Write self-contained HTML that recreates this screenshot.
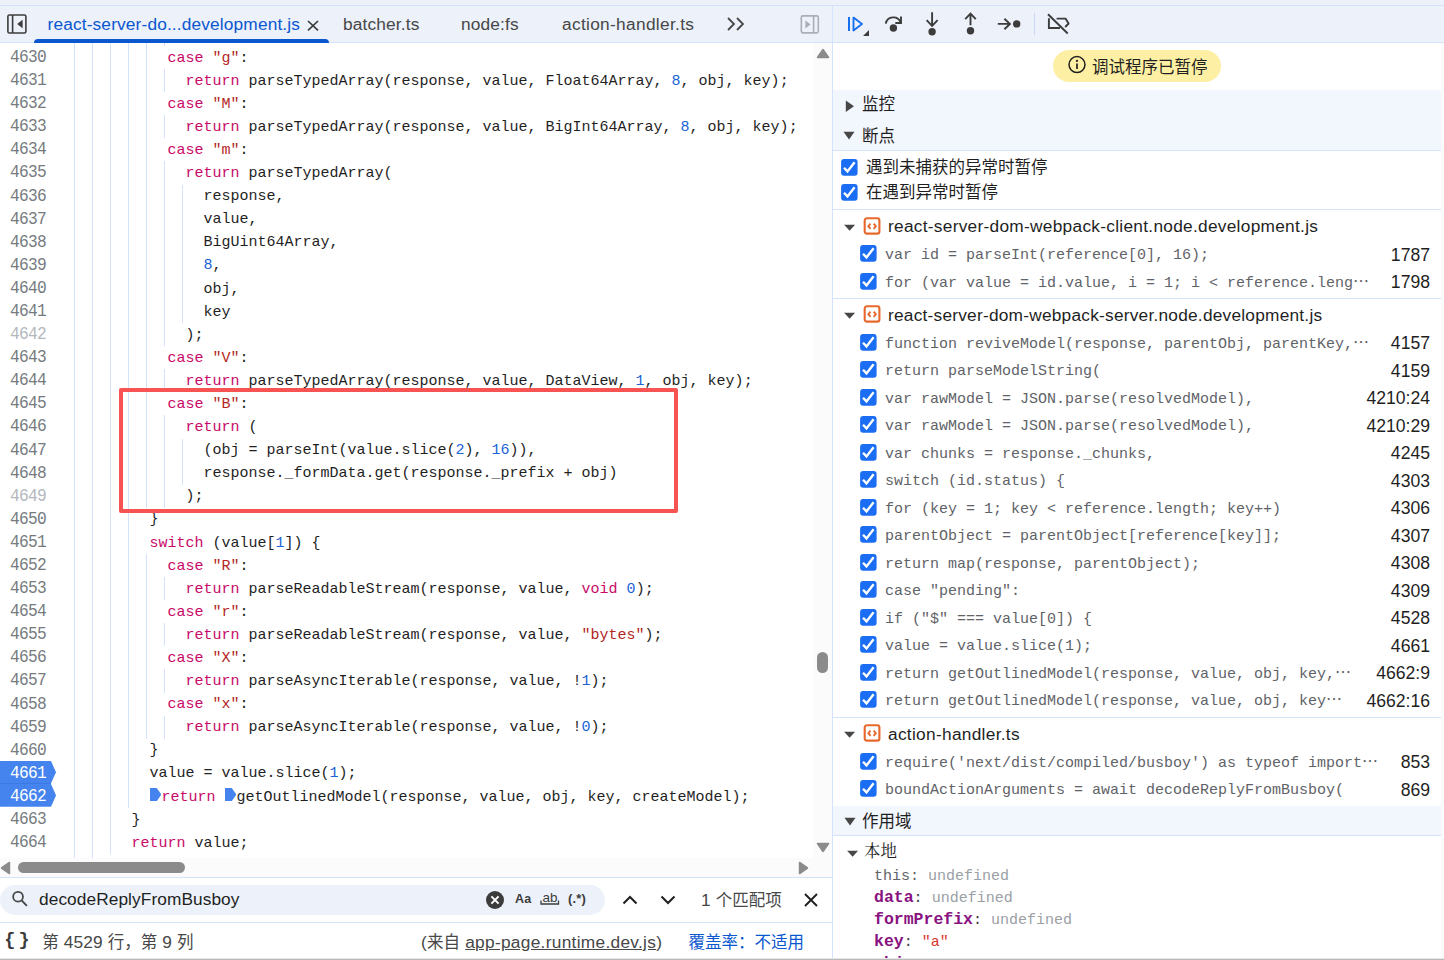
<!DOCTYPE html>
<html lang="zh-CN">
<head>
<meta charset="utf-8">
<title>DevTools</title>
<style>
*{box-sizing:border-box;margin:0;padding:0}
html,body{width:1444px;height:960px;overflow:hidden;background:#fff}
body{position:relative;font-family:"Liberation Sans","Noto Sans CJK SC",sans-serif;font-size:16.5px;color:#1f1f1f}
.abs{position:absolute}
.hl{position:absolute;height:1px;background:#d3e3fd}
.vl{position:absolute;width:1px;background:#d3e3fd}
.bar{position:absolute;background:#ecf1fa}
.t{position:absolute;white-space:nowrap;line-height:25px;height:25px;font-size:17.3px;letter-spacing:.15px}
.zh{font-size:16.5px;letter-spacing:0}
/* code */
#code{position:absolute;left:0;top:43px;width:813px;height:815px;overflow:hidden;background:#fff}
.row{position:absolute;left:0;width:813px;height:23.09px}
.row .ln,.row .c{position:absolute;top:0;font-family:"Liberation Mono",monospace;font-size:15px;line-height:23.09px;white-space:pre;height:23.09px}
.ln{left:10px;color:#767b80;font-size:18px !important;letter-spacing:-0.8px;transform:scaleX(0.9);transform-origin:0 0}
.ln.dim{color:#b4b8bd}
.ln.bp{color:#fff}
.c{color:#1f1f1f;top:0.7px !important}
.g{position:absolute;top:0;width:1px;height:23.09px;background:#d3e3fd}
.k{color:#c80a68}.s{color:#b3261e}.n{color:#1a62d6}
.ib{display:inline-block;width:11.8px;height:13.2px;margin:0 0.1px;vertical-align:-0.6px;background:#4584ee;clip-path:polygon(0 0,60% 0,100% 50%,60% 100%,0 100%)}
.bpm{position:absolute;left:0;height:23px;width:57px}
/* right */
.bc{position:absolute;font-family:"Liberation Mono",monospace;font-size:15px;line-height:23px;height:23px;white-space:pre;color:#5f6368}
.el{font-family:"Noto Sans CJK SC",sans-serif;font-size:16px;letter-spacing:0;line-height:0}
.loc{right:14px;text-align:right;color:#1f1f1f;font-size:17.6px;letter-spacing:0}
.cb{position:absolute}
.sv{position:absolute;font-family:"Liberation Mono",monospace;font-size:15px;line-height:22px;white-space:pre;left:874px;color:#3c3c3c}
.sv b{color:#881280;font-weight:bold;font-size:16.5px}
.sv .d{color:#5f6368}
.sv .u{color:#9aa0a6}
.sv .st{color:#dc362e}
</style>
</head>
<body>
<!-- top strip + bars -->
<div class="bar" style="left:0;top:0;width:1444px;height:43px"></div>
<div class="hl" style="left:0;top:5px;width:1444px"></div>
<div class="hl" style="left:0;top:42px;width:1444px"></div>

<!-- left tab bar -->
<svg class="abs" style="left:6px;top:13px" width="22" height="22" viewBox="0 0 22 22"><rect x="1.9" y="2" width="18" height="18" rx="1.6" fill="none" stroke="#3c3c3c" stroke-width="1.6"/><path d="M6.6 2 V20" stroke="#3c3c3c" stroke-width="1.6"/><path d="M16.6 6.8 V15.2 L11.2 11 Z" fill="#3c3c3c"/></svg>
<div class="t" id="tab1" style="left:47.5px;top:12px;color:#0b57d0">react-server-do...development.js</div>
<svg class="abs" style="left:305px;top:17px" width="16" height="16" viewBox="0 0 16 16"><path d="M3 4 L13 13.4 M13 4 L3 13.4" stroke="#3c3c3c" stroke-width="1.7" fill="none"/></svg>
<div class="abs" style="left:34px;top:39px;width:294.6px;height:4px;background:#0b57d0;border-radius:4px 4px 0 0"></div>
<div class="t" id="tab2" style="left:343px;top:12px;color:#474747">batcher.ts</div>
<div class="t" id="tab3" style="left:461px;top:12px;color:#474747">node:fs</div>
<div class="t" id="tab4" style="left:562px;letter-spacing:.32px;top:12px;color:#474747">action-handler.ts</div>
<svg class="abs" style="left:726px;top:16px" width="20" height="16" viewBox="0 0 20 16"><path d="M2 2 L8 8 L2 14 M11 2 L17 8 L11 14" stroke="#474747" stroke-width="1.8" fill="none"/></svg>
<svg class="abs" style="left:798.6px;top:13px" width="22" height="22" viewBox="0 0 22 22"><rect x="2.3" y="2.9" width="17" height="17" rx="1.6" fill="none" stroke="#a9afb8" stroke-width="1.6"/><path d="M14.6 2.9 V19.9" stroke="#a9afb8" stroke-width="1.6"/><path d="M6.4 7.4 V15.4 L11.6 11.4 Z" fill="#a9afb8"/></svg>

<!-- code editor -->
<div id="code">
<div class="bpm" style="top:718px"><svg width="57" height="47" viewBox="0 0 57 47"><path d="M0 22 H51.2 L50.8 23.3 H0 Z" fill="#3b76e2"/><path d="M0 0.1 H51 L56 11.2 L51 22.2 H0 Z" fill="#4584ee"/><path d="M0 23.1 H51 L56 34.4 L51 45.7 H0 Z" fill="#4584ee"/></svg></div>
<div class="row" style="top:-20.09px"><i class="g" style="left:74px"></i><i class="g" style="left:92px"></i><i class="g" style="left:110px"></i><i class="g" style="left:128px"></i><i class="g" style="left:146px"></i><i class="g" style="left:164px"></i></div>
<div class="row" style="top:3.00px"><i class="g" style="left:74px"></i><i class="g" style="left:92px"></i><i class="g" style="left:110px"></i><i class="g" style="left:128px"></i><i class="g" style="left:146px"></i><span class="ln">4630</span><span class="c" style="left:167.5px"><span class="k">case</span> <span class="s">"g"</span>:</span></div>
<div class="row" style="top:26.09px"><i class="g" style="left:74px"></i><i class="g" style="left:92px"></i><i class="g" style="left:110px"></i><i class="g" style="left:128px"></i><i class="g" style="left:146px"></i><i class="g" style="left:164px"></i><span class="ln">4631</span><span class="c" style="left:185.5px"><span class="k">return</span> parseTypedArray(response, value, Float64Array, <span class="n">8</span>, obj, key);</span></div>
<div class="row" style="top:49.18px"><i class="g" style="left:74px"></i><i class="g" style="left:92px"></i><i class="g" style="left:110px"></i><i class="g" style="left:128px"></i><i class="g" style="left:146px"></i><span class="ln">4632</span><span class="c" style="left:167.5px"><span class="k">case</span> <span class="s">"M"</span>:</span></div>
<div class="row" style="top:72.27px"><i class="g" style="left:74px"></i><i class="g" style="left:92px"></i><i class="g" style="left:110px"></i><i class="g" style="left:128px"></i><i class="g" style="left:146px"></i><i class="g" style="left:164px"></i><span class="ln">4633</span><span class="c" style="left:185.5px"><span class="k">return</span> parseTypedArray(response, value, BigInt64Array, <span class="n">8</span>, obj, key);</span></div>
<div class="row" style="top:95.36px"><i class="g" style="left:74px"></i><i class="g" style="left:92px"></i><i class="g" style="left:110px"></i><i class="g" style="left:128px"></i><i class="g" style="left:146px"></i><span class="ln">4634</span><span class="c" style="left:167.5px"><span class="k">case</span> <span class="s">"m"</span>:</span></div>
<div class="row" style="top:118.45px"><i class="g" style="left:74px"></i><i class="g" style="left:92px"></i><i class="g" style="left:110px"></i><i class="g" style="left:128px"></i><i class="g" style="left:146px"></i><i class="g" style="left:164px"></i><span class="ln">4635</span><span class="c" style="left:185.5px"><span class="k">return</span> parseTypedArray(</span></div>
<div class="row" style="top:141.54px"><i class="g" style="left:74px"></i><i class="g" style="left:92px"></i><i class="g" style="left:110px"></i><i class="g" style="left:128px"></i><i class="g" style="left:146px"></i><i class="g" style="left:164px"></i><i class="g" style="left:182px"></i><span class="ln">4636</span><span class="c" style="left:203.5px">response,</span></div>
<div class="row" style="top:164.63px"><i class="g" style="left:74px"></i><i class="g" style="left:92px"></i><i class="g" style="left:110px"></i><i class="g" style="left:128px"></i><i class="g" style="left:146px"></i><i class="g" style="left:164px"></i><i class="g" style="left:182px"></i><span class="ln">4637</span><span class="c" style="left:203.5px">value,</span></div>
<div class="row" style="top:187.72px"><i class="g" style="left:74px"></i><i class="g" style="left:92px"></i><i class="g" style="left:110px"></i><i class="g" style="left:128px"></i><i class="g" style="left:146px"></i><i class="g" style="left:164px"></i><i class="g" style="left:182px"></i><span class="ln">4638</span><span class="c" style="left:203.5px">BigUint64Array,</span></div>
<div class="row" style="top:210.81px"><i class="g" style="left:74px"></i><i class="g" style="left:92px"></i><i class="g" style="left:110px"></i><i class="g" style="left:128px"></i><i class="g" style="left:146px"></i><i class="g" style="left:164px"></i><i class="g" style="left:182px"></i><span class="ln">4639</span><span class="c" style="left:203.5px"><span class="n">8</span>,</span></div>
<div class="row" style="top:233.90px"><i class="g" style="left:74px"></i><i class="g" style="left:92px"></i><i class="g" style="left:110px"></i><i class="g" style="left:128px"></i><i class="g" style="left:146px"></i><i class="g" style="left:164px"></i><i class="g" style="left:182px"></i><span class="ln">4640</span><span class="c" style="left:203.5px">obj,</span></div>
<div class="row" style="top:256.99px"><i class="g" style="left:74px"></i><i class="g" style="left:92px"></i><i class="g" style="left:110px"></i><i class="g" style="left:128px"></i><i class="g" style="left:146px"></i><i class="g" style="left:164px"></i><i class="g" style="left:182px"></i><span class="ln">4641</span><span class="c" style="left:203.5px">key</span></div>
<div class="row" style="top:280.08px"><i class="g" style="left:74px"></i><i class="g" style="left:92px"></i><i class="g" style="left:110px"></i><i class="g" style="left:128px"></i><i class="g" style="left:146px"></i><i class="g" style="left:164px"></i><span class="ln dim">4642</span><span class="c" style="left:185.5px">);</span></div>
<div class="row" style="top:303.17px"><i class="g" style="left:74px"></i><i class="g" style="left:92px"></i><i class="g" style="left:110px"></i><i class="g" style="left:128px"></i><i class="g" style="left:146px"></i><span class="ln">4643</span><span class="c" style="left:167.5px"><span class="k">case</span> <span class="s">"V"</span>:</span></div>
<div class="row" style="top:326.26px"><i class="g" style="left:74px"></i><i class="g" style="left:92px"></i><i class="g" style="left:110px"></i><i class="g" style="left:128px"></i><i class="g" style="left:146px"></i><i class="g" style="left:164px"></i><span class="ln">4644</span><span class="c" style="left:185.5px"><span class="k">return</span> parseTypedArray(response, value, DataView, <span class="n">1</span>, obj, key);</span></div>
<div class="row" style="top:349.35px"><i class="g" style="left:74px"></i><i class="g" style="left:92px"></i><i class="g" style="left:110px"></i><i class="g" style="left:128px"></i><i class="g" style="left:146px"></i><span class="ln">4645</span><span class="c" style="left:167.5px"><span class="k">case</span> <span class="s">"B"</span>:</span></div>
<div class="row" style="top:372.44px"><i class="g" style="left:74px"></i><i class="g" style="left:92px"></i><i class="g" style="left:110px"></i><i class="g" style="left:128px"></i><i class="g" style="left:146px"></i><i class="g" style="left:164px"></i><span class="ln">4646</span><span class="c" style="left:185.5px"><span class="k">return</span> (</span></div>
<div class="row" style="top:395.53px"><i class="g" style="left:74px"></i><i class="g" style="left:92px"></i><i class="g" style="left:110px"></i><i class="g" style="left:128px"></i><i class="g" style="left:146px"></i><i class="g" style="left:164px"></i><i class="g" style="left:182px"></i><span class="ln">4647</span><span class="c" style="left:203.5px">(obj = parseInt(value.slice(<span class="n">2</span>), <span class="n">16</span>)),</span></div>
<div class="row" style="top:418.62px"><i class="g" style="left:74px"></i><i class="g" style="left:92px"></i><i class="g" style="left:110px"></i><i class="g" style="left:128px"></i><i class="g" style="left:146px"></i><i class="g" style="left:164px"></i><i class="g" style="left:182px"></i><span class="ln">4648</span><span class="c" style="left:203.5px">response._formData.get(response._prefix + obj)</span></div>
<div class="row" style="top:441.71px"><i class="g" style="left:74px"></i><i class="g" style="left:92px"></i><i class="g" style="left:110px"></i><i class="g" style="left:128px"></i><i class="g" style="left:146px"></i><i class="g" style="left:164px"></i><span class="ln dim">4649</span><span class="c" style="left:185.5px">);</span></div>
<div class="row" style="top:464.80px"><i class="g" style="left:74px"></i><i class="g" style="left:92px"></i><i class="g" style="left:110px"></i><i class="g" style="left:128px"></i><span class="ln">4650</span><span class="c" style="left:149.5px">}</span></div>
<div class="row" style="top:487.89px"><i class="g" style="left:74px"></i><i class="g" style="left:92px"></i><i class="g" style="left:110px"></i><i class="g" style="left:128px"></i><span class="ln">4651</span><span class="c" style="left:149.5px"><span class="k">switch</span> (value[<span class="n">1</span>]) {</span></div>
<div class="row" style="top:510.98px"><i class="g" style="left:74px"></i><i class="g" style="left:92px"></i><i class="g" style="left:110px"></i><i class="g" style="left:128px"></i><i class="g" style="left:146px"></i><span class="ln">4652</span><span class="c" style="left:167.5px"><span class="k">case</span> <span class="s">"R"</span>:</span></div>
<div class="row" style="top:534.07px"><i class="g" style="left:74px"></i><i class="g" style="left:92px"></i><i class="g" style="left:110px"></i><i class="g" style="left:128px"></i><i class="g" style="left:146px"></i><i class="g" style="left:164px"></i><span class="ln">4653</span><span class="c" style="left:185.5px"><span class="k">return</span> parseReadableStream(response, value, <span class="k">void</span> <span class="n">0</span>);</span></div>
<div class="row" style="top:557.16px"><i class="g" style="left:74px"></i><i class="g" style="left:92px"></i><i class="g" style="left:110px"></i><i class="g" style="left:128px"></i><i class="g" style="left:146px"></i><span class="ln">4654</span><span class="c" style="left:167.5px"><span class="k">case</span> <span class="s">"r"</span>:</span></div>
<div class="row" style="top:580.25px"><i class="g" style="left:74px"></i><i class="g" style="left:92px"></i><i class="g" style="left:110px"></i><i class="g" style="left:128px"></i><i class="g" style="left:146px"></i><i class="g" style="left:164px"></i><span class="ln">4655</span><span class="c" style="left:185.5px"><span class="k">return</span> parseReadableStream(response, value, <span class="s">"bytes"</span>);</span></div>
<div class="row" style="top:603.34px"><i class="g" style="left:74px"></i><i class="g" style="left:92px"></i><i class="g" style="left:110px"></i><i class="g" style="left:128px"></i><i class="g" style="left:146px"></i><span class="ln">4656</span><span class="c" style="left:167.5px"><span class="k">case</span> <span class="s">"X"</span>:</span></div>
<div class="row" style="top:626.43px"><i class="g" style="left:74px"></i><i class="g" style="left:92px"></i><i class="g" style="left:110px"></i><i class="g" style="left:128px"></i><i class="g" style="left:146px"></i><i class="g" style="left:164px"></i><span class="ln">4657</span><span class="c" style="left:185.5px"><span class="k">return</span> parseAsyncIterable(response, value, !<span class="n">1</span>);</span></div>
<div class="row" style="top:649.52px"><i class="g" style="left:74px"></i><i class="g" style="left:92px"></i><i class="g" style="left:110px"></i><i class="g" style="left:128px"></i><i class="g" style="left:146px"></i><span class="ln">4658</span><span class="c" style="left:167.5px"><span class="k">case</span> <span class="s">"x"</span>:</span></div>
<div class="row" style="top:672.61px"><i class="g" style="left:74px"></i><i class="g" style="left:92px"></i><i class="g" style="left:110px"></i><i class="g" style="left:128px"></i><i class="g" style="left:146px"></i><i class="g" style="left:164px"></i><span class="ln">4659</span><span class="c" style="left:185.5px"><span class="k">return</span> parseAsyncIterable(response, value, !<span class="n">0</span>);</span></div>
<div class="row" style="top:695.70px"><i class="g" style="left:74px"></i><i class="g" style="left:92px"></i><i class="g" style="left:110px"></i><i class="g" style="left:128px"></i><span class="ln">4660</span><span class="c" style="left:149.5px">}</span></div>
<div class="row" style="top:718.79px"><i class="g" style="left:74px"></i><i class="g" style="left:92px"></i><i class="g" style="left:110px"></i><i class="g" style="left:128px"></i><span class="ln bp">4661</span><span class="c" style="left:149.5px">value = value.slice(<span class="n">1</span>);</span></div>
<div class="row" style="top:741.88px"><i class="g" style="left:74px"></i><i class="g" style="left:92px"></i><i class="g" style="left:110px"></i><i class="g" style="left:128px"></i><span class="ln bp">4662</span><span class="c" style="left:149.5px"><b class="ib"></b><span class="k">return</span> <b class="ib"></b>getOutlinedModel(response, value, obj, key, createModel);</span></div>
<div class="row" style="top:764.97px"><i class="g" style="left:74px"></i><i class="g" style="left:92px"></i><i class="g" style="left:110px"></i><span class="ln">4663</span><span class="c" style="left:131.5px">}</span></div>
<div class="row" style="top:788.06px"><i class="g" style="left:74px"></i><i class="g" style="left:92px"></i><i class="g" style="left:110px"></i><span class="ln">4664</span><span class="c" style="left:131.5px"><span class="k">return</span> value;</span></div>
<div class="row" style="top:811.15px"><i class="g" style="left:74px"></i><i class="g" style="left:92px"></i><span class="ln">4665</span><span class="c" style="left:113.5px">}</span></div>
</div>
<!-- red annotation rectangle -->
<div class="abs" style="left:119px;top:388px;width:558.5px;height:125px;border:4.6px solid #f75353;border-radius:2px"></div>

<!-- vertical scrollbar -->
<div class="abs" style="left:813px;top:43px;width:19px;height:815px;background:#fbfbfb"></div>
<svg class="abs" style="left:815.5px;top:48.2px" width="14" height="11" viewBox="0 0 14 11"><path d="M7 0.8 Q7.6 0.8 8 1.4 L13.2 9 Q13.6 10.2 12.4 10.2 H1.6 Q0.4 10.2 0.8 9 L6 1.4 Q6.4 0.8 7 0.8Z" fill="#8b8b8b"/></svg>
<svg class="abs" style="left:815.5px;top:842px" width="14" height="11" viewBox="0 0 14 11"><path d="M7 10.2 Q7.6 10.2 8 9.6 L13.2 2 Q13.6 0.8 12.4 0.8 H1.6 Q0.4 0.8 0.8 2 L6 9.6 Q6.4 10.2 7 10.2Z" fill="#8b8b8b"/></svg>
<div class="abs" style="left:817px;top:652px;width:11px;height:21px;border-radius:5.5px;background:#8b8b8b"></div>
<!-- horizontal scrollbar -->
<div class="abs" style="left:0;top:858px;width:832px;height:19px;background:#fbfbfb"></div>
<svg class="abs" style="left:0px;top:861px" width="11" height="14" viewBox="0 0 11 14"><path d="M0.8 7 Q0.8 6.4 1.4 6 L9 0.8 Q10.2 0.4 10.2 1.6 V12.4 Q10.2 13.6 9 13.2 L1.4 8 Q0.8 7.6 0.8 7Z" fill="#8b8b8b"/></svg>
<svg class="abs" style="left:798px;top:861px" width="11" height="14" viewBox="0 0 11 14"><path d="M10.2 7 Q10.2 6.4 9.6 6 L2 0.8 Q0.8 0.4 0.8 1.6 V12.4 Q0.8 13.6 2 13.2 L9.6 8 Q10.2 7.6 10.2 7Z" fill="#8b8b8b"/></svg>
<div class="abs" style="left:18px;top:862px;width:167px;height:11px;border-radius:5.5px;background:#8b8b8b"></div>
<div class="hl" style="left:0;top:877px;width:832px"></div>

<!-- search bar -->
<div class="abs" style="left:0;top:885px;width:604.6px;height:30px;border-radius:15px;background:#edf2fa"></div>
<svg class="abs" style="left:10px;top:890px" width="20" height="20" viewBox="0 0 20 20"><circle cx="8.05" cy="6.7" r="4.9" fill="none" stroke="#474747" stroke-width="1.8"/><path d="M11.6 10.3 L16.9 15.8" stroke="#474747" stroke-width="1.9"/></svg>
<div class="t" id="srch" style="left:39px;top:887px;letter-spacing:.08px;color:#1f1f1f">decodeReplyFromBusboy</div>
<svg class="abs" style="left:485px;top:890px" width="20" height="20" viewBox="0 0 20 20"><circle cx="10" cy="10" r="9" fill="#3c3c3c"/><path d="M6.4 6.4 L13.6 13.6 M13.6 6.4 L6.4 13.6" stroke="#fff" stroke-width="2"/></svg>
<div class="t" style="left:515px;top:887px;font-size:12.5px;font-weight:bold;color:#3c3c3c">Aa</div>
<div class="t" style="left:542.5px;top:884.5px;font-size:13.5px;letter-spacing:0;color:#3c3c3c">ab</div><svg class="abs" style="left:540px;top:900px" width="20" height="6" viewBox="0 0 20 6"><path d="M1 0.5 V4 H18.5 V0.5" fill="none" stroke="#3c3c3c" stroke-width="1.3"/></svg>
<div class="t" style="left:568px;top:886px;font-size:13px;font-weight:bold;color:#3c3c3c">(.*)</div>
<svg class="abs" style="left:621px;top:892px" width="18" height="16" viewBox="0 0 18 16"><path d="M2.5 11.5 L9 5 L15.5 11.5" stroke="#1f1f1f" stroke-width="2" fill="none"/></svg>
<svg class="abs" style="left:659px;top:892px" width="18" height="16" viewBox="0 0 18 16"><path d="M2.5 4.5 L9 11 L15.5 4.5" stroke="#1f1f1f" stroke-width="2" fill="none"/></svg>
<div class="t" id="match" style="left:701px;top:888px;color:#474747">1 <span class="zh">个匹配项</span></div>
<svg class="abs" style="left:803px;top:892px" width="16" height="16" viewBox="0 0 16 16"><path d="M2 2 L14 14 M14 2 L2 14" stroke="#1f1f1f" stroke-width="1.9" fill="none"/></svg>
<div class="hl" style="left:0;top:922px;width:832px"></div>

<!-- status bar -->
<div class="t" style="left:4.2px;top:927.5px;font-family:'Liberation Mono',monospace;font-size:18.5px;font-weight:bold;color:#3c3c3c;letter-spacing:3.2px;transform-origin:0 0">{}</div>
<div class="t" id="pos" style="left:42.3px;top:929.8px;color:#474747"><span class="zh">第</span> 4529 <span class="zh">行，第</span> 9 <span class="zh">列</span></div>
<div class="t" id="from" style="left:421px;top:929.8px;letter-spacing:.3px;color:#474747">(<span class="zh">来自</span> <span style="text-decoration:underline">app-page.runtime.dev.js</span>)</div>
<div class="t zh" id="cov" style="left:688.5px;top:929.8px;color:#0b57d0">覆盖率：不适用</div>

<!-- divider -->
<div class="vl" style="left:832px;top:5px;height:955px"></div>

<!-- right toolbar -->
<svg class="abs" style="left:845px;top:12px" width="26" height="26" viewBox="0 0 26 26"><path d="M4 5 V19" stroke="#1a6ff0" stroke-width="2"/><path d="M8.5 5.6 L17 12 L8.5 18.4 Z" fill="none" stroke="#1a6ff0" stroke-width="1.9" stroke-linejoin="round"/><path d="M24 18 V24 H18 Z" fill="#3c3c3c"/></svg>
<svg class="abs" style="left:883px;top:12px" width="24" height="24" viewBox="0 0 24 24"><path d="M2.75 11.6 A7.7 7.7 0 0 1 17.6 10.6" fill="none" stroke="#3c3c3c" stroke-width="1.9"/><path d="M18 4.4 V11 H12.3" fill="none" stroke="#3c3c3c" stroke-width="1.9"/><circle cx="10.4" cy="16" r="3.7" fill="#3c3c3c"/></svg>
<svg class="abs" style="left:920px;top:10px" width="24" height="28" viewBox="0 0 24 28"><path d="M12.1 2.2 V15.6 M6.6 10.1 L12.1 15.8 L17.6 10.1" fill="none" stroke="#3c3c3c" stroke-width="1.9"/><circle cx="12.1" cy="21.8" r="3.7" fill="#3c3c3c"/></svg>
<svg class="abs" style="left:958px;top:10px" width="24" height="28" viewBox="0 0 24 28"><path d="M12.5 15.2 V3.8 M7.2 9.1 L12.5 3.6 L17.8 9.1" fill="none" stroke="#3c3c3c" stroke-width="1.9"/><circle cx="12.5" cy="20.8" r="3.7" fill="#3c3c3c"/></svg>
<svg class="abs" style="left:996px;top:12px" width="28" height="24" viewBox="0 0 28 24"><path d="M1.8 11.9 H13.7 M8.4 6.7 L13.9 11.9 L8.4 17.2" fill="none" stroke="#3c3c3c" stroke-width="1.9"/><circle cx="20.7" cy="11.9" r="3.7" fill="#3c3c3c"/></svg>
<div class="vl" style="left:1034px;top:13px;height:22px;background:#c7d9f7"></div>
<svg class="abs" style="left:1046px;top:12px" width="26" height="24" viewBox="0 0 26 24"><path d="M2.9 6.3 V16 H14" fill="none" stroke="#3c3c3c" stroke-width="1.9"/><path d="M10.6 6.6 H19.5 L22.6 11.5 L19.2 15" fill="none" stroke="#3c3c3c" stroke-width="1.9" stroke-linejoin="round"/><path d="M2 2.2 L21.7 21.5" stroke="#3c3c3c" stroke-width="1.9"/></svg>

<!-- paused pill -->
<div class="abs" style="left:1053px;top:50px;width:168.4px;height:32.2px;border-radius:16px;background:#fdf0a4"></div>
<svg class="abs" style="left:1066px;top:54.3px" width="22" height="22" viewBox="0 0 22 22"><circle cx="11" cy="10.6" r="8" fill="none" stroke="#1f1f1f" stroke-width="1.5"/><path d="M11 9.6 V15" stroke="#1f1f1f" stroke-width="1.7"/><circle cx="11" cy="6.9" r="1.05" fill="#1f1f1f"/></svg>
<div class="t zh" id="pill" style="left:1092px;top:55.2px;color:#1f1f1f">调试程序已暂停</div>

<!-- section headers -->
<div class="abs" style="left:833px;top:90px;width:608px;height:60px;background:#f2f6fd"></div>
<svg class="abs" style="left:845.4px;top:100.2px" width="10" height="13" viewBox="0 0 10 13"><path d="M0.8 0.4 V12 L9 6.2 Z" fill="#474747"/></svg>
<div class="t zh" style="left:862px;top:92px">监控</div>
<svg class="abs" style="left:843.4px;top:131.2px" width="13" height="10" viewBox="0 0 13 10"><path d="M0.5 0.8 H11.5 L6 8.6 Z" fill="#474747"/></svg>
<div class="t zh" style="left:862px;top:124.3px">断点</div>
<div class="hl" style="left:833px;top:150px;width:608px"></div>
<svg class="cb" style="left:841.0px;top:158.7px" width="17" height="17" viewBox="0 0 17 17"><rect x="0.1" y="0.1" width="16.5" height="16.7" rx="3" fill="#1b6ef3"/><path d="M3 8.75 L6.5 12.4 L13.6 3.3" fill="none" stroke="#fff" stroke-width="2.4"/></svg>
<div class="t zh" id="ex1" style="left:866px;top:155.2px">遇到未捕获的异常时暂停</div>
<svg class="cb" style="left:841.0px;top:183.5px" width="17" height="17" viewBox="0 0 17 17"><rect x="0.1" y="0.1" width="16.5" height="16.7" rx="3" fill="#1b6ef3"/><path d="M3 8.75 L6.5 12.4 L13.6 3.3" fill="none" stroke="#fff" stroke-width="2.4"/></svg>
<div class="t zh" id="ex2" style="left:866px;top:180.2px">在遇到异常时暂停</div>
<div class="hl" style="left:833px;top:209px;width:608px"></div>
<div class="hl" style="left:833px;top:298px;width:608px"></div>
<div class="hl" style="left:833px;top:717px;width:608px"></div>
<svg class="abs" style="left:844.0px;top:223.8px" width="12" height="8" viewBox="0 0 12 8"><path d="M0.1 0.8 H11.1 L5.6 6.7 Z" fill="#474747"/></svg>
<svg class="abs" style="left:863.0px;top:216.8px" width="18" height="19" viewBox="0 0 18 19"><rect x="1.7" y="1.3" width="14.7" height="15.3" rx="2.2" fill="#fff" stroke="#e8682c" stroke-width="2.1"/><path d="M7.5 6.6 L5.4 9.2 L7.5 11.8 M10.7 6.6 L12.8 9.2 L10.7 11.8" fill="none" stroke="#e8682c" stroke-width="1.9"/></svg>
<div class="t gt" style="left:888px;top:214.3px;letter-spacing:.28px">react-server-dom-webpack-client.node.development.js</div>
<svg class="cb" style="left:860.0px;top:245.2px" width="17" height="17" viewBox="0 0 17 17"><rect x="0.1" y="0.1" width="16.5" height="16.7" rx="3" fill="#1b6ef3"/><path d="M3 8.75 L6.5 12.4 L13.6 3.3" fill="none" stroke="#fff" stroke-width="2.4"/></svg>
<div class="bc" style="left:885px;top:244.2px">var id = parseInt(reference[0], 16);</div>
<div class="t loc" style="top:242.8px">1787</div>
<svg class="cb" style="left:860.0px;top:272.7px" width="17" height="17" viewBox="0 0 17 17"><rect x="0.1" y="0.1" width="16.5" height="16.7" rx="3" fill="#1b6ef3"/><path d="M3 8.75 L6.5 12.4 L13.6 3.3" fill="none" stroke="#fff" stroke-width="2.4"/></svg>
<div class="bc" style="left:885px;top:271.7px">for (var value = id.value, i = 1; i &lt; reference.leng<span class="el">…</span></div>
<div class="t loc" style="top:270.3px">1798</div>
<svg class="abs" style="left:844.0px;top:312.3px" width="12" height="8" viewBox="0 0 12 8"><path d="M0.1 0.8 H11.1 L5.6 6.7 Z" fill="#474747"/></svg>
<svg class="abs" style="left:863.0px;top:305.3px" width="18" height="19" viewBox="0 0 18 19"><rect x="1.7" y="1.3" width="14.7" height="15.3" rx="2.2" fill="#fff" stroke="#e8682c" stroke-width="2.1"/><path d="M7.5 6.6 L5.4 9.2 L7.5 11.8 M10.7 6.6 L12.8 9.2 L10.7 11.8" fill="none" stroke="#e8682c" stroke-width="1.9"/></svg>
<div class="t gt" style="left:888px;top:302.8px;letter-spacing:.23px">react-server-dom-webpack-server.node.development.js</div>
<svg class="cb" style="left:860.0px;top:333.7px" width="17" height="17" viewBox="0 0 17 17"><rect x="0.1" y="0.1" width="16.5" height="16.7" rx="3" fill="#1b6ef3"/><path d="M3 8.75 L6.5 12.4 L13.6 3.3" fill="none" stroke="#fff" stroke-width="2.4"/></svg>
<div class="bc" style="left:885px;top:332.7px">function reviveModel(response, parentObj, parentKey,<span class="el">…</span></div>
<div class="t loc" style="top:331.3px">4157</div>
<svg class="cb" style="left:860.0px;top:361.2px" width="17" height="17" viewBox="0 0 17 17"><rect x="0.1" y="0.1" width="16.5" height="16.7" rx="3" fill="#1b6ef3"/><path d="M3 8.75 L6.5 12.4 L13.6 3.3" fill="none" stroke="#fff" stroke-width="2.4"/></svg>
<div class="bc" style="left:885px;top:360.2px">return parseModelString(</div>
<div class="t loc" style="top:358.8px">4159</div>
<svg class="cb" style="left:860.0px;top:388.7px" width="17" height="17" viewBox="0 0 17 17"><rect x="0.1" y="0.1" width="16.5" height="16.7" rx="3" fill="#1b6ef3"/><path d="M3 8.75 L6.5 12.4 L13.6 3.3" fill="none" stroke="#fff" stroke-width="2.4"/></svg>
<div class="bc" style="left:885px;top:387.7px">var rawModel = JSON.parse(resolvedModel),</div>
<div class="t loc" style="top:386.3px">4210:24</div>
<svg class="cb" style="left:860.0px;top:416.2px" width="17" height="17" viewBox="0 0 17 17"><rect x="0.1" y="0.1" width="16.5" height="16.7" rx="3" fill="#1b6ef3"/><path d="M3 8.75 L6.5 12.4 L13.6 3.3" fill="none" stroke="#fff" stroke-width="2.4"/></svg>
<div class="bc" style="left:885px;top:415.2px">var rawModel = JSON.parse(resolvedModel),</div>
<div class="t loc" style="top:413.8px">4210:29</div>
<svg class="cb" style="left:860.0px;top:443.7px" width="17" height="17" viewBox="0 0 17 17"><rect x="0.1" y="0.1" width="16.5" height="16.7" rx="3" fill="#1b6ef3"/><path d="M3 8.75 L6.5 12.4 L13.6 3.3" fill="none" stroke="#fff" stroke-width="2.4"/></svg>
<div class="bc" style="left:885px;top:442.7px">var chunks = response._chunks,</div>
<div class="t loc" style="top:441.3px">4245</div>
<svg class="cb" style="left:860.0px;top:471.2px" width="17" height="17" viewBox="0 0 17 17"><rect x="0.1" y="0.1" width="16.5" height="16.7" rx="3" fill="#1b6ef3"/><path d="M3 8.75 L6.5 12.4 L13.6 3.3" fill="none" stroke="#fff" stroke-width="2.4"/></svg>
<div class="bc" style="left:885px;top:470.2px">switch (id.status) {</div>
<div class="t loc" style="top:468.8px">4303</div>
<svg class="cb" style="left:860.0px;top:498.7px" width="17" height="17" viewBox="0 0 17 17"><rect x="0.1" y="0.1" width="16.5" height="16.7" rx="3" fill="#1b6ef3"/><path d="M3 8.75 L6.5 12.4 L13.6 3.3" fill="none" stroke="#fff" stroke-width="2.4"/></svg>
<div class="bc" style="left:885px;top:497.7px">for (key = 1; key &lt; reference.length; key++)</div>
<div class="t loc" style="top:496.3px">4306</div>
<svg class="cb" style="left:860.0px;top:526.2px" width="17" height="17" viewBox="0 0 17 17"><rect x="0.1" y="0.1" width="16.5" height="16.7" rx="3" fill="#1b6ef3"/><path d="M3 8.75 L6.5 12.4 L13.6 3.3" fill="none" stroke="#fff" stroke-width="2.4"/></svg>
<div class="bc" style="left:885px;top:525.2px">parentObject = parentObject[reference[key]];</div>
<div class="t loc" style="top:523.8px">4307</div>
<svg class="cb" style="left:860.0px;top:553.7px" width="17" height="17" viewBox="0 0 17 17"><rect x="0.1" y="0.1" width="16.5" height="16.7" rx="3" fill="#1b6ef3"/><path d="M3 8.75 L6.5 12.4 L13.6 3.3" fill="none" stroke="#fff" stroke-width="2.4"/></svg>
<div class="bc" style="left:885px;top:552.7px">return map(response, parentObject);</div>
<div class="t loc" style="top:551.3px">4308</div>
<svg class="cb" style="left:860.0px;top:581.2px" width="17" height="17" viewBox="0 0 17 17"><rect x="0.1" y="0.1" width="16.5" height="16.7" rx="3" fill="#1b6ef3"/><path d="M3 8.75 L6.5 12.4 L13.6 3.3" fill="none" stroke="#fff" stroke-width="2.4"/></svg>
<div class="bc" style="left:885px;top:580.2px">case "pending":</div>
<div class="t loc" style="top:578.8px">4309</div>
<svg class="cb" style="left:860.0px;top:608.7px" width="17" height="17" viewBox="0 0 17 17"><rect x="0.1" y="0.1" width="16.5" height="16.7" rx="3" fill="#1b6ef3"/><path d="M3 8.75 L6.5 12.4 L13.6 3.3" fill="none" stroke="#fff" stroke-width="2.4"/></svg>
<div class="bc" style="left:885px;top:607.7px">if ("$" === value[0]) {</div>
<div class="t loc" style="top:606.3px">4528</div>
<svg class="cb" style="left:860.0px;top:636.2px" width="17" height="17" viewBox="0 0 17 17"><rect x="0.1" y="0.1" width="16.5" height="16.7" rx="3" fill="#1b6ef3"/><path d="M3 8.75 L6.5 12.4 L13.6 3.3" fill="none" stroke="#fff" stroke-width="2.4"/></svg>
<div class="bc" style="left:885px;top:635.2px">value = value.slice(1);</div>
<div class="t loc" style="top:633.8px">4661</div>
<svg class="cb" style="left:860.0px;top:663.7px" width="17" height="17" viewBox="0 0 17 17"><rect x="0.1" y="0.1" width="16.5" height="16.7" rx="3" fill="#1b6ef3"/><path d="M3 8.75 L6.5 12.4 L13.6 3.3" fill="none" stroke="#fff" stroke-width="2.4"/></svg>
<div class="bc" style="left:885px;top:662.7px">return getOutlinedModel(response, value, obj, key,<span class="el">…</span></div>
<div class="t loc" style="top:661.3px">4662:9</div>
<svg class="cb" style="left:860.0px;top:691.2px" width="17" height="17" viewBox="0 0 17 17"><rect x="0.1" y="0.1" width="16.5" height="16.7" rx="3" fill="#1b6ef3"/><path d="M3 8.75 L6.5 12.4 L13.6 3.3" fill="none" stroke="#fff" stroke-width="2.4"/></svg>
<div class="bc" style="left:885px;top:690.2px">return getOutlinedModel(response, value, obj, key<span class="el">…</span></div>
<div class="t loc" style="top:688.8px">4662:16</div>
<svg class="abs" style="left:844.0px;top:731.4px" width="12" height="8" viewBox="0 0 12 8"><path d="M0.1 0.8 H11.1 L5.6 6.7 Z" fill="#474747"/></svg>
<svg class="abs" style="left:863.0px;top:724.4px" width="18" height="19" viewBox="0 0 18 19"><rect x="1.7" y="1.3" width="14.7" height="15.3" rx="2.2" fill="#fff" stroke="#e8682c" stroke-width="2.1"/><path d="M7.5 6.6 L5.4 9.2 L7.5 11.8 M10.7 6.6 L12.8 9.2 L10.7 11.8" fill="none" stroke="#e8682c" stroke-width="1.9"/></svg>
<div class="t gt" style="left:888px;top:721.9px;letter-spacing:.3px">action-handler.ts</div>
<svg class="cb" style="left:860.0px;top:752.8px" width="17" height="17" viewBox="0 0 17 17"><rect x="0.1" y="0.1" width="16.5" height="16.7" rx="3" fill="#1b6ef3"/><path d="M3 8.75 L6.5 12.4 L13.6 3.3" fill="none" stroke="#fff" stroke-width="2.4"/></svg>
<div class="bc" style="left:885px;top:751.8px">require('next/dist/compiled/busboy') as typeof import<span class="el">…</span></div>
<div class="t loc" style="top:750.4px">853</div>
<svg class="cb" style="left:860.0px;top:780.3px" width="17" height="17" viewBox="0 0 17 17"><rect x="0.1" y="0.1" width="16.5" height="16.7" rx="3" fill="#1b6ef3"/><path d="M3 8.75 L6.5 12.4 L13.6 3.3" fill="none" stroke="#fff" stroke-width="2.4"/></svg>
<div class="bc" style="left:885px;top:779.3px">boundActionArguments = await decodeReplyFromBusboy(</div>
<div class="t loc" style="top:777.9px">869</div>

<!-- scope -->
<div class="abs" style="left:833px;top:806px;width:608px;height:29px;background:#f2f6fd"></div>
<div class="hl" style="left:833px;top:835px;width:608px"></div>
<svg class="abs" style="left:843.6px;top:816.6px" width="13" height="10" viewBox="0 0 13 10"><path d="M0.5 0.8 H11.5 L6 8.6 Z" fill="#474747"/></svg>
<div class="t zh" style="left:862px;top:809px">作用域</div>
<svg class="abs" style="left:847.2px;top:849.5px" width="12" height="8" viewBox="0 0 12 8"><path d="M0.1 0.8 H11.1 L5.6 6.7 Z" fill="#474747"/></svg>
<div class="t zh" style="left:864px;top:838.6px;font-size:16.5px;font-family:'Liberation Serif','Noto Serif CJK SC',serif">本地</div>
<div class="sv" style="top:865.5px"><span class="d">this: </span><span class="u">undefined</span></div>
<div class="sv" style="top:886.8px"><b>data</b>: <span class="u">undefined</span></div>
<div class="sv" style="top:908.9px"><b>formPrefix</b>: <span class="u">undefined</span></div>
<div class="sv" style="top:931px"><b>key</b>: <span class="st">"a"</span></div>
<div class="sv" style="top:953.1px"><b>obj</b>: </div>

<!-- right scrollbar strip + bottom border -->
<div class="abs" style="left:1441px;top:43px;width:3px;height:917px;background:#fafafa"></div>
<div class="abs" style="left:0;top:958px;width:1444px;height:1px;background:#e6e6e6"></div><div class="abs" style="left:0;top:959px;width:1444px;height:1px;background:#b9b9b9"></div>
</body>
</html>
